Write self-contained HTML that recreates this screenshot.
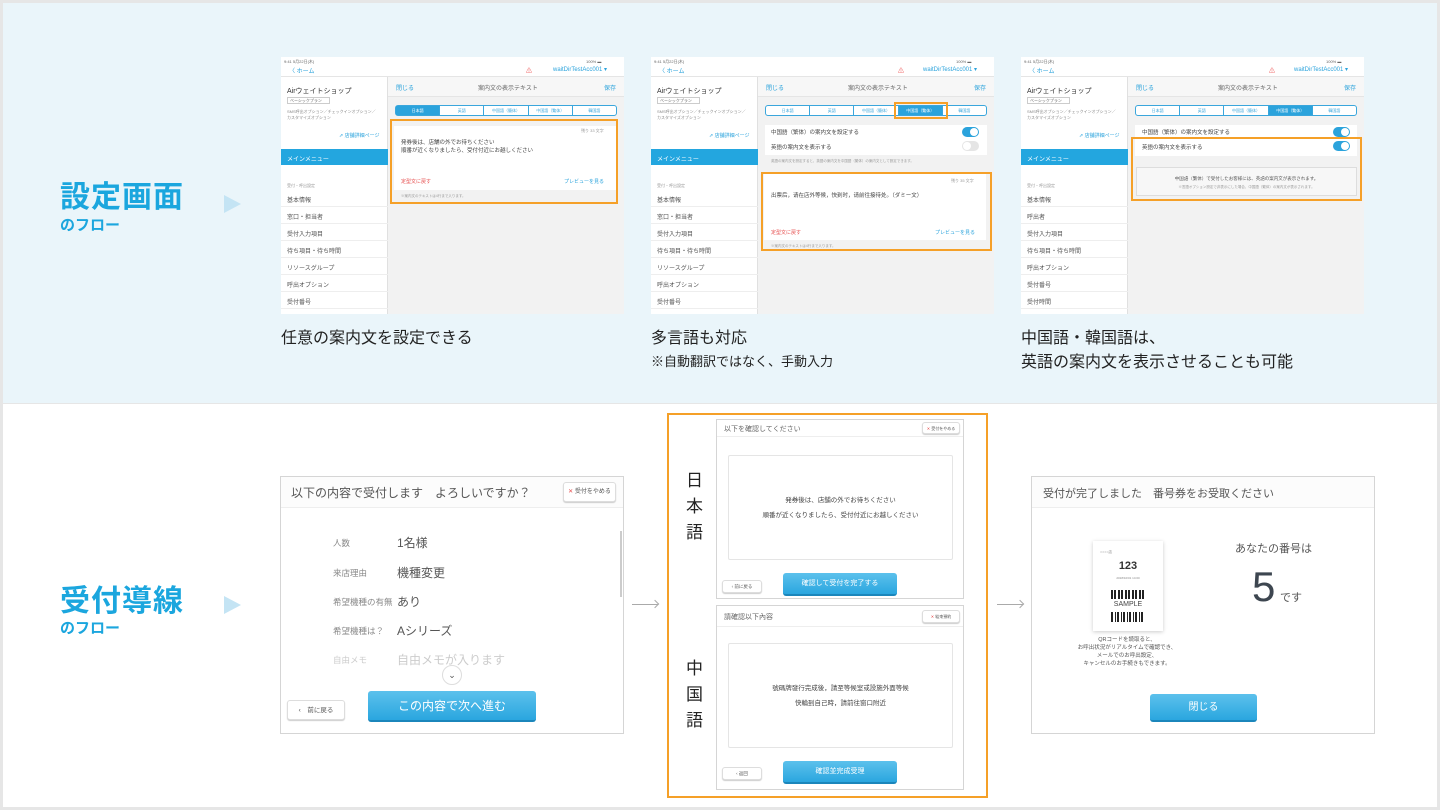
<!DOCTYPE html>
<html><head><meta charset="utf-8"><style>
*{box-sizing:border-box;margin:0;padding:0}
body{width:1440px;height:810px;position:relative;overflow:hidden;background:#e6e6e6;font-family:"Liberation Sans","Noto Sans CJK JP",sans-serif;color:#333}
.a{position:absolute}
.top{left:3px;top:3px;width:1434px;height:400px;background:#eaf5fa}
.bot{left:3px;top:404px;width:1434px;height:403px;background:#fff}
.big{font-size:30px;font-weight:bold;color:#1ba6de;letter-spacing:1px}
.sub{font-size:15px;font-weight:bold;color:#1ba6de}
.tri{width:0;height:0;border-top:9px solid transparent;border-bottom:9px solid transparent;border-left:17px solid #c4e4f4}
.ph{width:343px;height:257px;background:#f2f2f2;overflow:hidden;font-size:6px;color:#666}
.ph .sb{left:0;top:0;width:343px;height:20px;background:#fff;border-bottom:1px solid #e5e5e5}
.ph .side{left:0;top:20px;width:107px;height:237px;background:#fff;border-right:1px solid #e0e0e0}
.ph .mh{left:107px;top:20px;width:236px;height:20px;background:#f7f7f7;border-bottom:1px solid #e5e5e5}
.li{left:0;width:107px;height:17px;border-bottom:1px solid #eee;padding:5px 0 0 6px;font-size:6px;color:#555}
.seg{left:114px;top:48px;width:222px;height:11px;border:1px solid #3aa6dc;border-radius:3px;background:#fff;display:flex}
.seg div{flex:1;border-right:1px solid #3aa6dc;font-size:4px;color:#3aa6dc;text-align:center;line-height:9px}
.seg div:last-child{border-right:0}
.seg .on{background:#2ba3dc;color:#fff}
.cap{font-size:16px;color:#222;line-height:24px}
.tog{width:17px;height:10px;border-radius:5px;background:#2ba3dc}
.tog:after{content:"";position:absolute;right:1px;top:1px;width:8px;height:8px;border-radius:4px;background:#fff}
.toff{background:#e5e5e5}
.toff:after{left:1px;right:auto}
.box{border:2px solid #f5a028}
.scr{background:#fff;border:1px solid #d5d5d5;overflow:hidden}
.btn{background:linear-gradient(#5cc1ec,#2aa6df);border-bottom:2px solid #1b86bb;border-radius:3px;color:#fff;text-align:center}
.wb{background:#fff;border:1px solid #ddd;border-radius:3px;box-shadow:0 1px 1px #ccc;color:#555;text-align:center}
.red{color:#e64b4b}
</style></head><body>
<div class="a top"></div><div class="a bot"></div>

<div class="a big" style="left:60px;top:172px">設定画面</div>
<div class="a sub" style="left:60px;top:214px">のフロー</div>
<div class="a tri" style="left:224px;top:195px"></div>
<div class="a big" style="left:60px;top:576px">受付導線</div>
<div class="a sub" style="left:60px;top:617px">のフロー</div>
<div class="a tri" style="left:224px;top:596px"></div>

<!-- phone 1 -->
<div class="a ph" style="left:281px;top:57px">
 <div class="a sb"><span class="a" style="left:3px;top:2px;font-size:4px">9:41 5月22日(木)</span><span class="a" style="left:8px;top:9px;color:#2ba3dc;font-size:6px">〈 ホーム</span><span class="a" style="left:245px;top:9px;color:#e55">⚠</span><span class="a" style="left:272px;top:9px;color:#2ba3dc;font-size:6px">waitDirTestAcc001 ▾</span><span class="a" style="left:305px;top:2px;font-size:4px">100% ▬</span></div>
 <div class="a side">
  <div class="a" style="left:6px;top:9px;font-size:7px;color:#333">Airウェイトショップ</div>
  <div class="a" style="left:6px;top:20px;width:43px;height:7px;border:1px solid #ccc;font-size:4px;padding-left:2px">ベーシックプラン</div>
  <div class="a" style="left:6px;top:32px;font-size:4px;color:#888;width:90px">SMS呼出オプション／チェックインオプション／カスタマイズオプション</div>
  <div class="a" style="left:58px;top:55px;font-size:5px;color:#2ba3dc">⇗ 店舗詳細ページ</div>
  <div class="a" style="left:0;top:72px;width:107px;height:16px;background:#23a6df;color:#fff;font-size:6px;padding:5px 0 0 6px">メインメニュー</div>
  <div class="a" style="left:6px;top:106px;font-size:4px;color:#999">受付・呼出設定</div>
  <div class="a li" style="top:113px">基本情報</div><div class="a li" style="top:130px">窓口・担当者</div><div class="a li" style="top:147px">受付入力項目</div><div class="a li" style="top:164px">待ち項目・待ち時間</div><div class="a li" style="top:181px">リソースグループ</div><div class="a li" style="top:198px">呼出オプション</div><div class="a li" style="top:215px">受付番号</div><div class="a li" style="top:232px">受付時間</div>
 </div>
 <div class="a mh"><span class="a" style="left:8px;top:6px;color:#2ba3dc">閉じる</span><span class="a" style="left:90px;top:6px">案内文の表示テキスト</span><span class="a" style="left:216px;top:6px;color:#2ba3dc">保存</span></div>
 <div class="a seg"><div class="on">日本語</div><div>英語</div><div>中国語（簡体）</div><div>中国語（繁体）</div><div>韓国語</div></div>
 <div class="a" style="left:113px;top:69px;width:222px;height:64px;background:#fff"></div>
 <div class="a" style="left:300px;top:71px;font-size:4px;color:#999">残り 33 文字</div>
 <div class="a" style="left:120px;top:82px;font-size:5.5px;line-height:8px;color:#444">発券後は、店舗の外でお待ちください<br>順番が近くなりましたら、受付付近にお越しください</div>
 <div class="a red" style="left:120px;top:121px;font-size:5px">定型文に戻す</div>
 <div class="a" style="left:283px;top:121px;font-size:5px;color:#2ba3dc">プレビューを見る</div>
 <div class="a" style="left:120px;top:137px;font-size:3.5px;color:#999">※案内文のテキストは4行まで入ります。</div>
 <div class="a box" style="left:109px;top:62px;width:228px;height:85px"></div>
</div>

<!-- phone 2 -->
<div class="a ph" style="left:651px;top:57px">
 <div class="a sb"><span class="a" style="left:3px;top:2px;font-size:4px">9:41 5月22日(木)</span><span class="a" style="left:8px;top:9px;color:#2ba3dc;font-size:6px">〈 ホーム</span><span class="a" style="left:247px;top:9px;color:#e55">⚠</span><span class="a" style="left:272px;top:9px;color:#2ba3dc;font-size:6px">waitDirTestAcc001 ▾</span><span class="a" style="left:305px;top:2px;font-size:4px">100% ▬</span></div>
 <div class="a side">
  <div class="a" style="left:6px;top:9px;font-size:7px;color:#333">Airウェイトショップ</div>
  <div class="a" style="left:6px;top:20px;width:43px;height:7px;border:1px solid #ccc;font-size:4px;padding-left:2px">ベーシックプラン</div>
  <div class="a" style="left:6px;top:32px;font-size:4px;color:#888;width:90px">SMS呼出オプション／チェックインオプション／カスタマイズオプション</div>
  <div class="a" style="left:58px;top:55px;font-size:5px;color:#2ba3dc">⇗ 店舗詳細ページ</div>
  <div class="a" style="left:0;top:72px;width:107px;height:16px;background:#23a6df;color:#fff;font-size:6px;padding:5px 0 0 6px">メインメニュー</div>
  <div class="a" style="left:6px;top:106px;font-size:4px;color:#999">受付・呼出設定</div>
  <div class="a li" style="top:113px">基本情報</div><div class="a li" style="top:130px">窓口・担当者</div><div class="a li" style="top:147px">受付入力項目</div><div class="a li" style="top:164px">待ち項目・待ち時間</div><div class="a li" style="top:181px">リソースグループ</div><div class="a li" style="top:198px">呼出オプション</div><div class="a li" style="top:215px">受付番号</div><div class="a li" style="top:232px">受付時間</div>
 </div>
 <div class="a mh"><span class="a" style="left:8px;top:6px;color:#2ba3dc">閉じる</span><span class="a" style="left:90px;top:6px">案内文の表示テキスト</span><span class="a" style="left:216px;top:6px;color:#2ba3dc">保存</span></div>
 <div class="a seg"><div>日本語</div><div>英語</div><div>中国語（簡体）</div><div class="on">中国語（繁体）</div><div>韓国語</div></div>
 <div class="a box" style="left:243px;top:45px;width:54px;height:17px"></div>
 <div class="a" style="left:114px;top:68px;width:222px;height:30px;background:#fff"></div>
 <div class="a" style="left:120px;top:71px;font-size:5.5px;color:#444">中国語（繁体）の案内文を設定する</div>
 <div class="a tog" style="left:311px;top:70px"></div>
 <div class="a" style="left:120px;top:86px;font-size:5.5px;color:#444">英語の案内文を表示する</div>
 <div class="a tog toff" style="left:311px;top:84px"></div>
 <div class="a" style="left:120px;top:102px;font-size:3.5px;color:#999">英語の案内文を設定すると、英語の案内文を中国語（繁体）の案内文として設定できます。</div>
 <div class="a" style="left:113px;top:117px;width:222px;height:66px;background:#fff"></div>
 <div class="a" style="left:300px;top:121px;font-size:4px;color:#999">残り 35 文字</div>
 <div class="a" style="left:120px;top:134px;font-size:5.5px;color:#444">出票后，请在店外等候，快到时，请前往接待处。（ダミー文）</div>
 <div class="a red" style="left:120px;top:172px;font-size:5px">定型文に戻す</div>
 <div class="a" style="left:284px;top:172px;font-size:5px;color:#2ba3dc">プレビューを見る</div>
 <div class="a" style="left:120px;top:187px;font-size:3.5px;color:#999">※案内文のテキストは4行まで入ります。</div>
 <div class="a box" style="left:110px;top:115px;width:231px;height:79px"></div>
</div>

<!-- phone 3 -->
<div class="a ph" style="left:1021px;top:57px">
 <div class="a sb"><span class="a" style="left:3px;top:2px;font-size:4px">9:41 5月22日(木)</span><span class="a" style="left:8px;top:9px;color:#2ba3dc;font-size:6px">〈 ホーム</span><span class="a" style="left:248px;top:9px;color:#e55">⚠</span><span class="a" style="left:273px;top:9px;color:#2ba3dc;font-size:6px">waitDirTestAcc001 ▾</span><span class="a" style="left:305px;top:2px;font-size:4px">100% ▬</span></div>
 <div class="a side">
  <div class="a" style="left:6px;top:9px;font-size:7px;color:#333">Airウェイトショップ</div>
  <div class="a" style="left:6px;top:20px;width:43px;height:7px;border:1px solid #ccc;font-size:4px;padding-left:2px">ベーシックプラン</div>
  <div class="a" style="left:6px;top:32px;font-size:4px;color:#888;width:90px">SMS呼出オプション／チェックインオプション／カスタマイズオプション</div>
  <div class="a" style="left:58px;top:55px;font-size:5px;color:#2ba3dc">⇗ 店舗詳細ページ</div>
  <div class="a" style="left:0;top:72px;width:107px;height:16px;background:#23a6df;color:#fff;font-size:6px;padding:5px 0 0 6px">メインメニュー</div>
  <div class="a" style="left:6px;top:106px;font-size:4px;color:#999">受付・呼出設定</div>
  <div class="a li" style="top:113px">基本情報</div><div class="a li" style="top:130px">呼出者</div><div class="a li" style="top:147px">受付入力項目</div><div class="a li" style="top:164px">待ち項目・待ち時間</div><div class="a li" style="top:181px">呼出オプション</div><div class="a li" style="top:198px">受付番号</div><div class="a li" style="top:215px">受付時間</div><div class="a li" style="top:232px">オンライン順番受付</div>
 </div>
 <div class="a mh"><span class="a" style="left:8px;top:6px;color:#2ba3dc">閉じる</span><span class="a" style="left:90px;top:6px">案内文の表示テキスト</span><span class="a" style="left:216px;top:6px;color:#2ba3dc">保存</span></div>
 <div class="a seg"><div>日本語</div><div>英語</div><div>中国語（簡体）</div><div class="on">中国語（繁体）</div><div>韓国語</div></div>
 <div class="a" style="left:114px;top:68px;width:222px;height:31px;background:#fff"></div>
 <div class="a" style="left:121px;top:71px;font-size:5.5px;color:#444">中国語（繁体）の案内文を設定する</div>
 <div class="a tog" style="left:312px;top:70px"></div>
 <div class="a" style="left:121px;top:86px;font-size:5.5px;color:#444">英語の案内文を表示する</div>
 <div class="a tog" style="left:312px;top:84px"></div>
 <div class="a" style="left:115px;top:110px;width:221px;height:29px;background:#f7f7f7;border:1px solid #ddd;text-align:center;font-size:4.5px;color:#555;padding-top:7px;line-height:8px">中国語（繁体）で受付したお客様には、英語の案内文が表示されます。<br><span style="font-size:3.5px;color:#999">※言語オプション設定で非表示にした場合、中国語（繁体）の案内文が表示されます。</span></div>
 <div class="a box" style="left:110px;top:80px;width:231px;height:64px"></div>
</div>

<div class="a cap" style="left:281px;top:327px">任意の案内文を設定できる</div>
<div class="a cap" style="left:651px;top:327px">多言語も対応</div>
<div class="a" style="left:651px;top:351px;font-size:13px;color:#222">※自動翻訳ではなく、手動入力</div>
<div class="a cap" style="left:1021px;top:327px">中国語・韓国語は、<br>英語の案内文を表示させることも可能</div>

<!-- bottom panel A -->
<div class="a scr" style="left:280px;top:476px;width:344px;height:258px">
 <div class="a" style="left:0;top:0;width:344px;height:31px;border-bottom:1px solid #eee;background:#fcfcfc"></div>
 <div class="a" style="left:10px;top:7px;font-size:12px;color:#555">以下の内容で受付します　よろしいですか？</div>
 <div class="a wb" style="left:282px;top:5px;width:53px;height:20px;font-size:6px;line-height:19px"><span class="red">✕</span> 受付をやめる</div>
 <div class="a" style="left:52px;top:60px;font-size:8.5px;color:#888">人数</div><div class="a" style="left:116px;top:57px;font-size:12px;color:#555">1名様</div>
 <div class="a" style="left:52px;top:90px;font-size:8.5px;color:#888">来店理由</div><div class="a" style="left:116px;top:87px;font-size:12px;color:#555">機種変更</div>
 <div class="a" style="left:52px;top:119px;font-size:8.5px;color:#888">希望機種の有無</div><div class="a" style="left:116px;top:116px;font-size:12px;color:#555">あり</div>
 <div class="a" style="left:52px;top:148px;font-size:8.5px;color:#888">希望機種は？</div><div class="a" style="left:116px;top:145px;font-size:12px;color:#555">Aシリーズ</div>
 <div class="a" style="left:52px;top:177px;font-size:8.5px;color:#ccc">自由メモ</div><div class="a" style="left:116px;top:174px;font-size:12px;color:#ccc">自由メモが入ります</div>
 <div class="a" style="left:339px;top:54px;width:2px;height:66px;background:#ccc"></div>
 <div class="a" style="left:161px;top:188px;width:20px;height:20px;border-radius:10px;background:#fff;border:1px solid #ddd;font-size:9px;text-align:center;line-height:18px;color:#555">⌄</div>
 <div class="a wb" style="left:6px;top:223px;width:58px;height:20px;font-size:6.5px;line-height:19px">‹　前に戻る</div>
 <div class="a btn" style="left:87px;top:214px;width:168px;height:31px;font-size:12px;line-height:30px">この内容で次へ進む</div>
</div>
<div class="a" style="left:632px;top:604px;width:26px;height:1px;background:#aaa"></div>
<div class="a" style="left:652px;top:601px;width:6px;height:6px;border-top:1px solid #aaa;border-right:1px solid #aaa;transform:rotate(45deg)"></div>

<!-- middle -->
<div class="a box" style="left:667px;top:413px;width:321px;height:385px"></div>
<div class="a" style="left:686px;top:468px;font-size:17px;line-height:26px;color:#222;width:20px">日<br>本<br>語</div>
<div class="a" style="left:686px;top:656px;font-size:17px;line-height:26px;color:#222;width:20px">中<br>国<br>語</div>
<div class="a scr" style="left:716px;top:419px;width:248px;height:180px">
 <div class="a" style="left:0;top:0;width:248px;height:17px;border-bottom:1px solid #eee"></div>
 <div class="a" style="left:7px;top:4px;font-size:7px;color:#666">以下を確認してください</div>
 <div class="a wb" style="left:205px;top:2px;width:38px;height:12px;font-size:4px;line-height:11px"><span class="red">✕</span> 受付をやめる</div>
 <div class="a" style="left:11px;top:35px;width:225px;height:105px;border:1px solid #e5e5e5;border-radius:2px;text-align:center;font-size:6.5px;line-height:15px;color:#444;padding-top:37px">発券後は、店舗の外でお待ちください<br>順番が近くなりましたら、受付付近にお越しください</div>
 <div class="a wb" style="left:5px;top:160px;width:40px;height:13px;font-size:4.5px;line-height:12px">‹ 前に戻る</div>
 <div class="a btn" style="left:66px;top:153px;width:114px;height:23px;font-size:7px;line-height:22px">確認して受付を完了する</div>
</div>
<div class="a scr" style="left:716px;top:605px;width:248px;height:185px">
 <div class="a" style="left:0;top:0;width:248px;height:21px;border-bottom:1px solid #eee"></div>
 <div class="a" style="left:7px;top:6px;font-size:7px;color:#666">請確認以下內容</div>
 <div class="a wb" style="left:205px;top:4px;width:38px;height:13px;font-size:4px;line-height:12px"><span class="red">✕</span> 結束預約</div>
 <div class="a" style="left:11px;top:37px;width:225px;height:105px;border:1px solid #e5e5e5;border-radius:2px;text-align:center;font-size:6.5px;line-height:15px;color:#444;padding-top:37px">號碼牌發行完成後，請至等候室或設施外面等候<br>快輪到自己時，請前往窗口附近</div>
 <div class="a wb" style="left:5px;top:161px;width:40px;height:13px;font-size:4.5px;line-height:12px">‹ 返回</div>
 <div class="a btn" style="left:66px;top:155px;width:114px;height:23px;font-size:7px;line-height:22px">確認並完成受理</div>
</div>
<div class="a" style="left:997px;top:604px;width:26px;height:1px;background:#aaa"></div>
<div class="a" style="left:1017px;top:601px;width:6px;height:6px;border-top:1px solid #aaa;border-right:1px solid #aaa;transform:rotate(45deg)"></div>

<!-- panel C -->
<div class="a scr" style="left:1031px;top:476px;width:344px;height:258px">
 <div class="a" style="left:0;top:0;width:344px;height:31px;border-bottom:1px solid #eee;background:#fcfcfc"></div>
 <div class="a" style="left:11px;top:8px;font-size:11px;color:#555">受付が完了しました　番号券をお受取ください</div>
 <div class="a" style="left:61px;top:64px;width:70px;height:90px;background:#fff;box-shadow:0 1px 4px #ccc"></div>
 <div class="a" style="left:68px;top:73px;font-size:3.5px;color:#888">○○○○店</div>
 <div class="a" style="left:61px;top:83px;width:70px;text-align:center;font-size:11px;font-weight:bold;color:#333">123</div>
 <div class="a" style="left:61px;top:99px;width:70px;text-align:center;font-size:3px;color:#888">2018/10/01 14:00</div>
 <div class="a" style="left:79px;top:113px;width:34px;height:9px;background:repeating-linear-gradient(90deg,#222 0 2px,#fff 2px 3px,#222 3px 5px,#fff 5px 7px)"></div>
 <div class="a" style="left:61px;top:124px;width:70px;text-align:center;font-size:7px;color:#444">SAMPLE</div>
 <div class="a" style="left:79px;top:135px;width:34px;height:10px;background:repeating-linear-gradient(90deg,#222 0 2px,#fff 2px 4px,#222 4px 5px,#fff 5px 6px)"></div>
 <div class="a" style="left:20px;top:159px;width:150px;text-align:center;font-size:5.5px;line-height:8px;color:#555">QRコードを読取ると、<br>お呼出状況がリアルタイムで確認でき、<br>メールでのお呼出設定、<br>キャンセルのお手続きもできます。</div>
 <div class="a" style="left:203px;top:63px;font-size:11px;color:#555">あなたの番号は</div>
 <div class="a" style="left:220px;top:86px;font-size:42px;color:#3d4650;font-weight:300">5</div>
 <div class="a" style="left:248px;top:112px;font-size:11px;color:#555">です</div>
 <div class="a btn" style="left:118px;top:217px;width:107px;height:28px;font-size:10px;line-height:27px">閉じる</div>
</div>
</body></html>
